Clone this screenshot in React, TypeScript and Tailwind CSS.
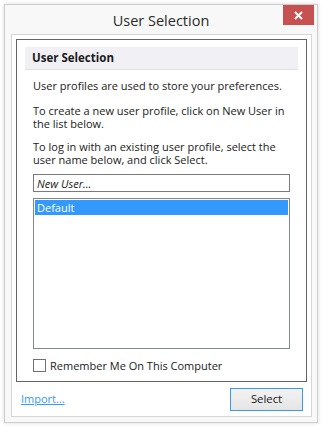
export default function App() {
  return (
    <div
      className="w-[323px] h-[427px] bg-white pl-[4px] pt-[4px] overflow-hidden"
      style={{ fontFamily: '"Open Sans", "Noto Sans", sans-serif' }}
    >
      <div className="w-[314px] h-[419px] border border-[#cdcdcd] bg-[#f8f8f8] shadow-[0_0_4px_rgba(0,0,0,0.15)] flex flex-col">
        {/* title bar */}
        <div className="relative h-[29px] flex items-center justify-center shrink-0">
          <span className="text-[14.5px] text-[#2b2b2b] mt-[2px]">User Selection</span>
          <button className="absolute top-0 right-[3px] w-[31px] h-[20px] bg-[#c75050] flex items-center justify-center">
            <svg width="9" height="9" viewBox="0 0 9 9">
              <path d="M1 1 L8 8 M8 1 L1 8" stroke="white" strokeWidth="2" />
            </svg>
          </button>
        </div>

        {/* body */}
        <div className="ml-[6px] w-[301px] h-[383px] border border-[#d6d6d6] bg-white px-[4px] pt-[4px] flex flex-col">
          <div className="w-[291px] h-[343px] border border-[#646464] flex flex-col">
            <div className="mx-[8px] mt-[7px] h-[23px] bg-[#f0f0f5] border-b border-[#e0e0e6] flex items-center pl-[7px] shrink-0">
              <span className="text-[11.5px] font-bold text-[#1a1a1a]">User Selection</span>
            </div>
            <div className="px-[16px] text-[11px] leading-[13px] text-[#1a1a1a] flex-1 flex flex-col">
              <p className="mt-[9px]">User profiles are used to store your preferences.</p>
              <p className="mt-[12px]">To create a new user profile, click on New User in the list below.</p>
              <p className="mt-[10px]">To log in with an existing user profile, select the user name below, and click Select.</p>
              <div className="mt-[8px] h-[18px] border border-[#7a7a7a] flex items-center pl-[3px] shrink-0">
                <span className="italic">New User...</span>
              </div>
              <div className="mt-[6px] flex-1 border border-[#828790] p-[1px]">
                <div className="h-[15px] bg-[#3399ff] text-white flex items-center pl-[2px]">Default</div>
              </div>
              <label className="mt-[10px] mb-[9px] flex items-center gap-[4px] shrink-0">
                <span className="w-[13px] h-[13px] border border-[#707070] bg-white" />
                <span>Remember Me On This Computer</span>
              </label>
            </div>
          </div>

          <div className="flex items-center justify-between pl-[5px] pr-[4px] mt-[6px]">
            <a className="text-[11px] text-[#3399ff] underline">Import...</a>
            <button className="w-[73px] h-[23px] border border-[#3c9be8] bg-gradient-to-b from-[#f2f2f2] to-[#e5e5e5] text-[11.3px] text-[#1a1a1a]">
              Select
            </button>
          </div>
        </div>
      </div>
    </div>
  );
}
